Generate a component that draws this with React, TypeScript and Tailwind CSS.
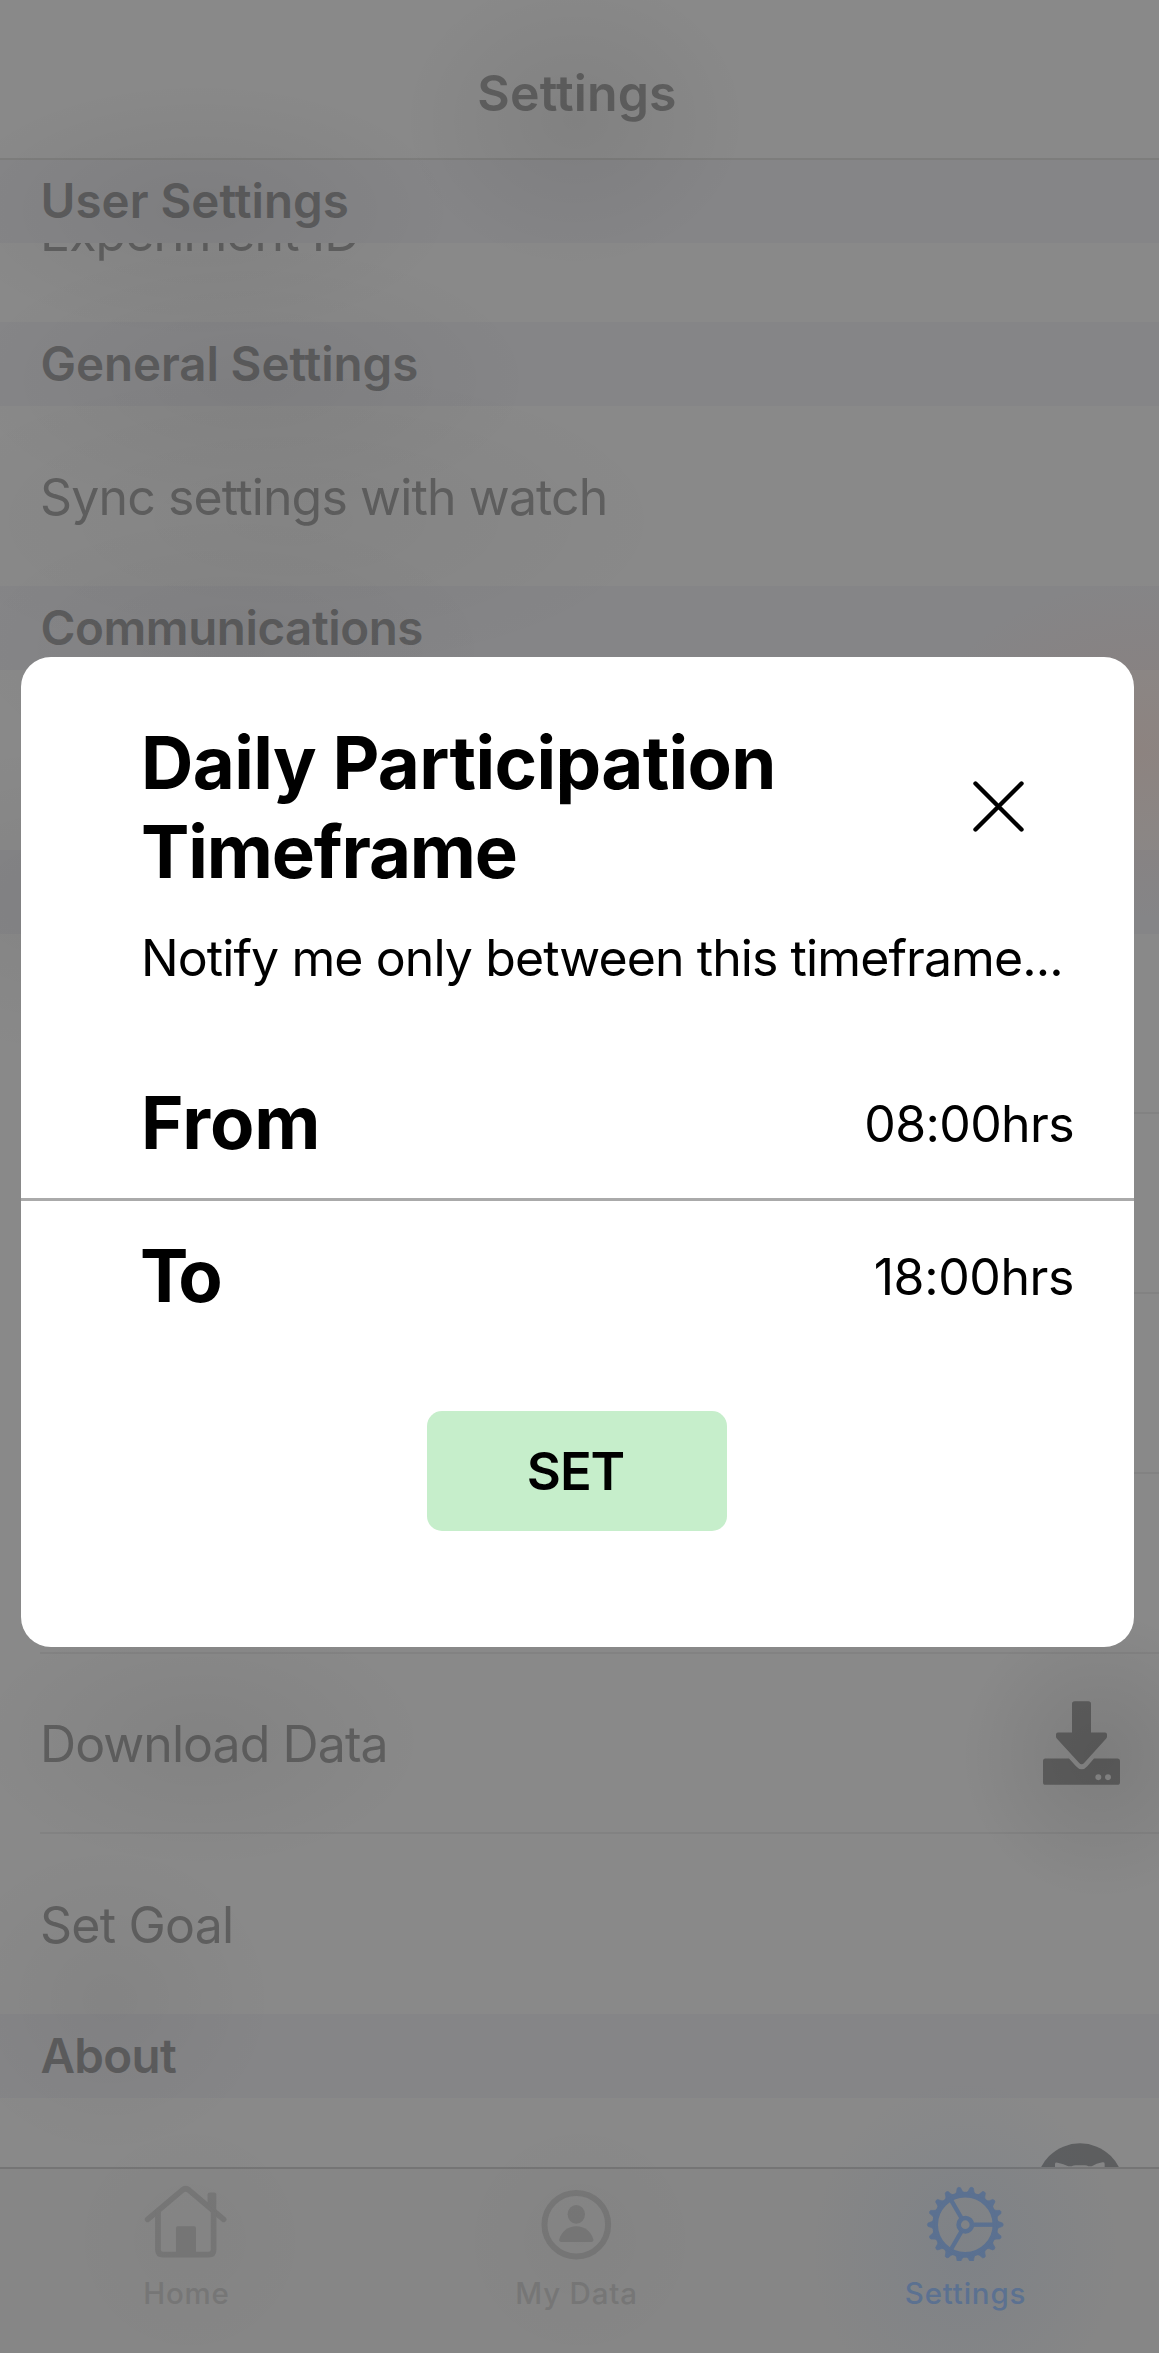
import type { ReactNode } from 'react';

function SectionHeader({ title, spacing = 'tracking-normal' }: { title: string; spacing?: string }) {
  return (
    <h2
      className={`flex h-[84px] shrink-0 items-center bg-[#858587] pl-[40.5px] text-[47.5px] leading-[60px] font-semibold text-[#5c5c5d] ${spacing}`}
    >
      {title}
    </h2>
  );
}

function Row({ label, spacing = '', divider = false, children }: { label?: string; spacing?: string; divider?: boolean; children?: ReactNode }) {
  return (
    <div className="h-[180px] shrink-0 pl-[40px]">
      <div
        className={`flex h-full items-center justify-between pt-[2px] pr-[39px] ${divider ? 'border-b-2 border-[#828282]' : ''}`}
      >
        <span className={`text-[50px] leading-[60px] whitespace-nowrap text-[#5f5f5f] ${spacing}`}>{label}</span>
        {children}
      </div>
    </div>
  );
}

function DownloadIcon() {
  return (
    <svg className="mb-[3px] h-[84px] w-[77px]" viewBox="69 62 231 251" fill="#5e5e5e">
      <path d="M164 62H205Q213 62 213 70V156H255Q261 156 261 162V168Q261 172 258 175L193 247Q185 256 177 247L111 175Q108 172 108 168V162Q108 156 114 156H156V70Q156 62 164 62Z" />
      <path
        fillRule="evenodd"
        d="M76 234H147L168 257Q185 276 202 257L222 234H292Q300 234 300 242V305Q300 313 292 313H76Q69 313 69 305V242Q69 234 76 234ZM235 281A9 9 0 1 0 235 299A9 9 0 1 0 235 281ZM264 281A9 9 0 1 0 264 299A9 9 0 1 0 264 281Z"
      />
    </svg>
  );
}

function GithubIcon() {
  return (
    <svg className="h-[88px] w-[88px] shrink-0" viewBox="51 70 264 264">
      <circle cx="183" cy="202" r="131" fill="#5d5e5f" />
      <path
        d="M108 170V132Q109 127 116 129Q134 132 148 140H158Q163 137 170 137H198Q204 137 208 140H218Q232 131 250 128Q257 127 257 132V170Z"
        fill="#858585"
      />
    </svg>
  );
}

function HomeIcon() {
  return (
    <svg className="h-[78.4px] w-[86.6px]" viewBox="69 70 260 235" fill="none" stroke="#777777" strokeWidth="17" strokeLinecap="round" strokeLinejoin="round">
      <path d="M83 179L187 91Q197 83 207 91L311 179" />
      <path d="M114 156V270Q114 285 129 285H266Q281 285 281 270V156" />
      <path d="M173 200H223Q228 200 228 205V280H168V205Q168 200 173 200Z" fill="#777777" stroke="none" />
      <path d="M270 98H283Q289 98 289 104V158L263 134V104Q263 98 270 98Z" fill="#777777" stroke="none" />
    </svg>
  );
}

function PersonIcon() {
  return (
    <svg className="h-[78.4px] w-[86.6px]" viewBox="100 70 260 235" fill="#777777">
      <circle cx="230" cy="195" r="95.5" fill="none" stroke="#777777" strokeWidth="18" />
      <ellipse cx="230" cy="164" rx="26" ry="28.5" />
      <path d="M186 247Q177 247 179 239C185 216 206 200 230 200S275 216 281 239Q283 247 274 247Z" />
    </svg>
  );
}

const TEETH = Array.from({ length: 18 }, (_, i) => i * 20);

function GearIcon() {
  return (
    <svg className="h-[78.4px] w-[86.6px]" viewBox="-130 -125 260 235" fill="#5d7291" stroke="#5d7291">
      <circle r="90.5" fill="none" strokeWidth="17" />
      {TEETH.map((a) => (
        <path key={a} d="M95 -13Q101 -8 112 -5Q116 0 112 5Q101 8 95 13Z" strokeWidth="2" strokeLinejoin="round" transform={`rotate(${a})`} />
      ))}
      <circle r="20" fill="none" strokeWidth="14" />
      {[0, 120, 240].map((a) => (
        <path key={a} d="M24 0H86" strokeWidth="13" transform={`rotate(${a})`} />
      ))}
    </svg>
  );
}

function Tab({ label, icon, color }: { label: string; icon: ReactNode; color: string }) {
  return (
    <div className={`flex flex-col items-center gap-[14px] pt-[14px] ${color}`}>
      {icon}
      <span className="text-[29.5px] leading-[36px] font-medium tracking-[0.8px]">{label}</span>
    </div>
  );
}

function Glows() {
  return (
    <div className="pointer-events-none absolute inset-0 overflow-hidden">
      <div className="absolute top-[-30px] left-[400px] h-[300px] w-[350px] bg-[radial-gradient(closest-side,rgba(0,0,0,0.06),transparent)]" />
      <div className="absolute top-[80px] left-[-60px] h-[260px] w-[520px] bg-[radial-gradient(closest-side,rgba(0,0,0,0.06),transparent)]" />
      <div className="absolute top-[240px] left-[-40px] h-[280px] w-[580px] bg-[radial-gradient(closest-side,rgba(0,0,0,0.05),transparent)]" />
      <div className="absolute top-[360px] left-[-100px] h-[320px] w-[780px] bg-[radial-gradient(closest-side,rgba(0,0,0,0.04),transparent)]" />
      <div className="absolute top-[510px] left-[-40px] h-[280px] w-[540px] bg-[radial-gradient(closest-side,rgba(0,0,0,0.04),transparent)]" />
      <div className="absolute top-[580px] left-[920px] h-[340px] w-[440px] bg-[radial-gradient(closest-side,rgba(160,100,80,0.16),transparent)]" />
      <div className="absolute top-[740px] left-[-150px] h-[320px] w-[400px] bg-[radial-gradient(closest-side,rgba(0,0,0,0.04),transparent)]" />
      <div className="absolute top-[1610px] left-[-30px] h-[260px] w-[460px] bg-[radial-gradient(closest-side,rgba(0,0,0,0.05),transparent)]" />
      <div className="absolute top-[1610px] left-[960px] h-[290px] w-[280px] bg-[radial-gradient(closest-side,rgba(0,0,0,0.09),transparent)]" />
      <div className="absolute top-[1840px] left-[-60px] h-[320px] w-[340px] bg-[radial-gradient(closest-side,rgba(0,0,0,0.04),transparent)]" />
      <div className="absolute top-[2110px] left-[60px] h-[260px] w-[260px] bg-[radial-gradient(closest-side,rgba(0,0,0,0.02),transparent)]" />
      <div className="absolute top-[2110px] left-[450px] h-[260px] w-[260px] bg-[radial-gradient(closest-side,rgba(0,0,0,0.02),transparent)]" />
      <div className="absolute top-[2080px] left-[810px] h-[340px] w-[310px] bg-[radial-gradient(closest-side,rgba(70,100,140,0.12),transparent)]" />
    </div>
  );
}

export default function App() {
  return (
    <div className="relative flex h-[2353px] w-[1159px] flex-col overflow-hidden bg-[#898989] font-[Inter,sans-serif]">
      <header className="flex h-[160px] shrink-0 justify-center border-b-2 border-[#7d7d7c] pt-[63px] pr-[5px]">
        <h1 className="text-[50px] leading-[60px] font-semibold tracking-[0.15px] text-[#5f5f5f]">Settings</h1>
      </header>

      <main className="flex h-[2007px] shrink-0 flex-col overflow-hidden">
        <div className="flex h-[83px] shrink-0 flex-col justify-end">
          <SectionHeader title="User Settings" />
        </div>
        <div className="flex h-[79px] shrink-0 flex-col justify-end overflow-hidden">
          <Row label="Experiment ID" spacing="tracking-[-0.9px]" />
        </div>
        <SectionHeader title="General Settings" spacing="tracking-[-0.1px]" />
        <Row label="Sync settings with watch" spacing="tracking-[-0.86px]" />
        <SectionHeader title="Communications" spacing="tracking-[-0.45px]" />
        <Row />
        <SectionHeader title="" />
        <Row divider />
        <Row divider />
        <Row divider />
        <Row divider />
        <Row label="Download Data" spacing="tracking-[-0.93px]" divider>
          <DownloadIcon />
        </Row>
        <Row label="Set Goal" spacing="tracking-[-0.79px]" />
        <SectionHeader title="About" spacing="tracking-[-0.7px]" />
        <div className="flex flex-1 justify-end overflow-hidden pt-[45px] pr-[35px]">
          <GithubIcon />
        </div>
      </main>

      <nav className="grid flex-1 grid-cols-[373px_407px_371px] border-t-2 border-[#757575] bg-[#868686]">
        <Tab label="Home" icon={<HomeIcon />} color="text-[#777777]" />
        <Tab label="My Data" icon={<PersonIcon />} color="text-[#777777]" />
        <Tab label="Settings" icon={<GearIcon />} color="text-[#5d7291]" />
      </nav>

      <Glows />

      <div
        role="dialog"
        className="absolute top-[657px] left-[21px] flex h-[990px] w-[1113px] flex-col rounded-[30px] bg-white pt-[61px] text-black"
      >
        <div className="flex items-center justify-between pr-[108px] pl-[120px]">
          <h2 className="text-[72.5px] leading-[89px] font-bold">
            <span className="block tracking-[-0.65px]">Daily Participation</span>
            <span className="block tracking-[-1.15px]">Timeframe</span>
          </h2>
          <svg className="mb-[2px] h-[55px] w-[55px]" viewBox="0 0 55 55" stroke="#000" strokeWidth="4.4" strokeLinecap="round">
            <path d="M4.5 4.5L50.5 50.5M50.5 4.5L4.5 50.5" />
          </svg>
        </div>
        <p className="mt-[32px] pl-[120px] text-[50px] leading-[60px] tracking-[-0.91px] whitespace-nowrap">
          Notify me only between this timeframe...
        </p>
        <div className="mt-[60px] flex h-[150px] items-center justify-between pr-[60px] pl-[120px]">
          <span className="pb-[2px] text-[72.5px] leading-[89px] font-bold">From</span>
          <span className="pt-[2px] text-[50px] leading-[60px] tracking-[-0.62px]">08:00hrs</span>
        </div>
        <div className="flex h-[153px] items-center justify-between border-t-[3px] border-[#aaaaaa] pr-[60px] pl-[119px]">
          <span className="pb-[2px] text-[72.5px] leading-[89px] font-bold tracking-[-4.6px]">To</span>
          <span className="pt-[2px] text-[50px] leading-[60px] tracking-[-0.4px]">18:00hrs</span>
        </div>
        <button className="mt-[60px] mr-px h-[120px] w-[300px] self-center rounded-[15px] bg-[#c6eecb] pr-[3px] text-[52.5px] leading-[60px] font-semibold tracking-[-1.1px]">
          SET
        </button>
      </div>
    </div>
  );
}
